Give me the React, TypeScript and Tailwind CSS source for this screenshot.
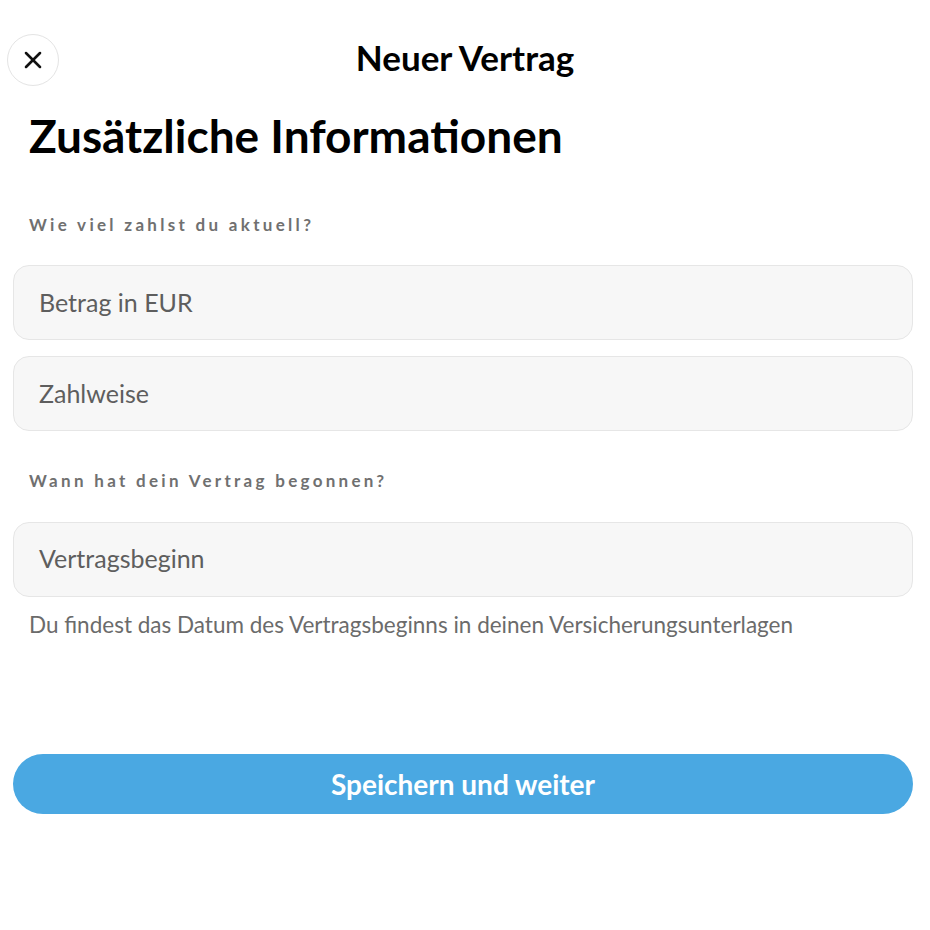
import { X } from "lucide-react";

const fields = [
    { label: "Wie viel zahlst du aktuell?", inputs: ["Betrag in EUR", "Zahlweise"] },
    { label: "Wann hat dein Vertrag begonnen?", inputs: ["Vertragsbeginn"] },
];

function Field({ placeholder }: { placeholder: string }) {
    return (
        <div className="flex h-[75px] items-center rounded-2xl border border-[#e6e6e6] bg-[#f7f7f7] px-[25px] text-[25px] text-[#5e5e5e]">
            {placeholder}
        </div>
    );
}

export default function App() {
    return (
        <div className="min-h-[930px] w-[930px] bg-white font-['Lato',sans-serif] text-black">
            {/* Header */}
            <div className="relative pt-[34px]">
                <button className="absolute left-[7px] top-[34px] flex h-[52px] w-[52px] items-center justify-center rounded-full border border-[#e4e4e4] bg-white">
                    <X size={28} strokeWidth={2.2} className="text-[#111]" />
                </button>
                <h1 className="h-[52px] text-center text-[35px] font-bold leading-[46px]">Neuer Vertrag</h1>
            </div>

            <div className="pl-[13px] pr-[17px]">
                <h2 className="px-[16px] pt-[25px] text-[46px] font-bold leading-[1.1]">
                    Zusätzliche Informationen
                </h2>

                <div className="mt-[50px] px-[16px] text-[17px] font-bold tracking-[3.3px] text-[#707070]">
                    {fields[0].label}
                </div>
                <div className="mt-[28px] flex flex-col gap-[16px]">
                    {fields[0].inputs.map((p) => (
                        <Field key={p} placeholder={p} />
                    ))}
                </div>

                <div className="mt-[37px] px-[16px] text-[17px] font-bold tracking-[3.3px] text-[#707070]">
                    {fields[1].label}
                </div>
                <div className="mt-[28px] flex flex-col gap-[16px]">
                    {fields[1].inputs.map((p) => (
                        <Field key={p} placeholder={p} />
                    ))}
                </div>
                <p className="mt-[11px] px-[16px] text-[22.5px] text-[#6b6b6b]">
                    Du findest das Datum des Vertragsbeginns in deinen Versicherungsunterlagen
                </p>

                <button className="mt-[113px] flex h-[60px] w-full items-center justify-center rounded-full bg-[#4aa8e2] text-[28px] font-bold text-white">
                    Speichern und weiter
                </button>
            </div>
        </div>
    );
}
